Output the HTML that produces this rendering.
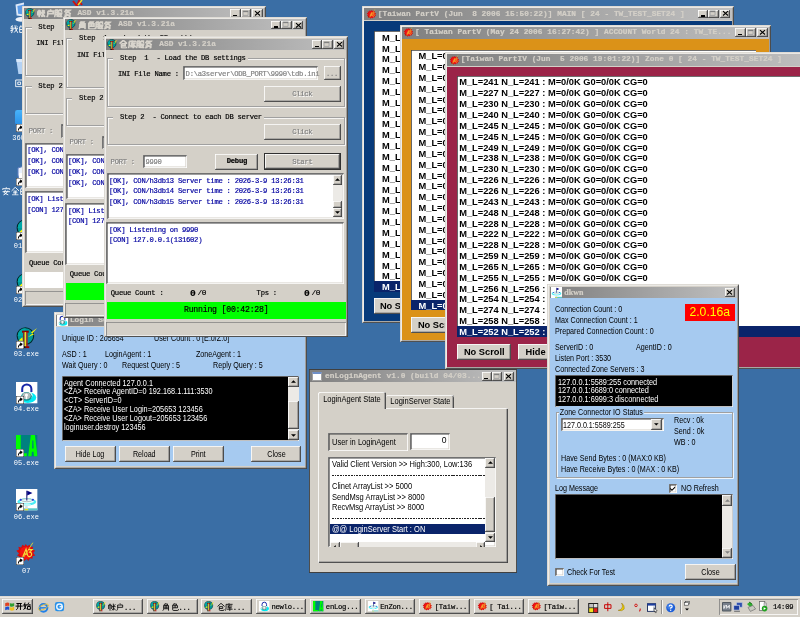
<!DOCTYPE html><html><head><meta charset="utf-8"><title>desktop</title><style>
*{box-sizing:border-box}
html,body{margin:0;padding:0}
body{width:800px;height:617px;overflow:hidden;background:#3A6EA5;position:relative;font-family:"Liberation Sans",sans-serif;font-size:8px;color:#000}
.a{position:absolute}
.w{position:absolute;background:#D4D0C8;box-shadow:inset .8px .8px #D4D0C8,inset -.8px -.8px #404040,inset 1.6px 1.6px #fff,inset -1.6px -1.6px #808080}
.tb{position:absolute;left:2.4px;right:2.4px;top:2.4px;height:11px;background:linear-gradient(90deg,#808080,#C0C0C0);overflow:hidden;white-space:pre}
.tt{position:absolute;top:0;height:11px;line-height:11.4px;color:#D4D0C8;font:bold 7.8px/11.4px "Liberation Mono",monospace;letter-spacing:.045px;white-space:pre;-webkit-text-stroke:.2px}
.cb{position:absolute;top:1.4px;width:10.2px;height:8.6px;background:#D4D0C8;box-shadow:inset -.8px -.8px #404040,inset .8px .8px #fff,inset -1.6px -1.6px #808080}
.b{position:absolute;background:#D4D0C8;box-shadow:inset -.8px -.8px #404040,inset .8px .8px #fff,inset -1.6px -1.6px #808080;text-align:center;white-space:pre}
.s{position:absolute;box-shadow:inset .8px .8px #808080,inset -.8px -.8px #fff,inset 1.6px 1.6px #404040,inset -1.6px -1.6px #D4D0C8}
.g{position:absolute;border:.8px solid #A0A0A0;box-shadow:.8px .8px #fff,inset .8px .8px #fff}
.m{font-family:"Liberation Mono",monospace;font-size:7.2px;letter-spacing:-.26px;white-space:pre;-webkit-text-stroke:.18px}
.n{font-size:9px;transform:scaleX(.795);transform-origin:0 50%}
.x{font-size:9px;display:inline-block;transform:scaleX(.795);white-space:pre}
.n2{font-size:8.6px;transform:scaleX(.874);transform-origin:0 50%}
.x2{font-size:8.6px;display:inline-block;transform:scaleX(.874);white-space:pre}
.t{position:absolute;white-space:pre;height:12px;line-height:12px}
.lb{position:absolute;background:#fff;overflow:hidden}
.r{position:absolute;left:0;width:105%;white-space:pre;font:bold 9.7px/12.8px "Liberation Sans",sans-serif;height:10.85px;transform:scaleX(.958);transform-origin:0 0}
.sel{background:#0A246A;color:#fff}
.sb{position:absolute;background:#ECEAE6}
.sa{position:absolute;left:0;width:100%;background:#D4D0C8;box-shadow:inset -.8px -.8px #404040,inset .8px .8px #fff,inset -1.6px -1.6px #808080}
.lbl{position:absolute;color:#fff;font:7px/9px "Liberation Mono",monospace;white-space:pre;text-align:center}
svg{position:absolute;overflow:visible}
#root{position:absolute;left:0;top:0;width:800px;height:617px;overflow:hidden;background:#3A6EA5;filter:blur(.35px)}
</style></head><body><div id="root">
<svg width="0" height="0" style="position:absolute"><defs>
<symbol id="iasd" viewBox="0 0 32 32"><circle cx="14" cy="13.5" r="12.3" fill="#009898" stroke="#002828" stroke-width="1.6"/><path d="M2.5 13.5A11.5 11.5 0 0 1 14 2V13.5Z" fill="#00A8A8"/><rect x="9" y="5.5" width="10" height="3" fill="#900000"/><rect x="10.4" y="7.5" width="2.4" height="22" fill="#802828"/><rect x="12.8" y="7.5" width="2.6" height="22" fill="#F0E020"/><rect x="15.4" y="7.5" width="1.8" height="22" fill="#C01010"/><rect x="9.5" y="28.6" width="5" height="3" fill="#101010"/><rect x="14.5" y="28.6" width="5.2" height="3" fill="#A00000"/><path d="M31.5 1.5L22 8L25 9.2L17.6 15.4L27 10.8L24.2 9.6Z" fill="#FFF800"/><path d="M3.6 20.4L9.4 15.4L10.2 20.6Z" fill="#FFF800"/></symbol>
<symbol id="ilock" viewBox="0 0 32 32"><rect width="32" height="32" fill="#fff"/><ellipse cx="17.5" cy="23" rx="12.5" ry="8" fill="#00ECF4"/><ellipse cx="14.5" cy="20" rx="10" ry="6.8" fill="#fff"/><ellipse cx="15.5" cy="21.4" rx="8" ry="6.4" fill="#189090"/><ellipse cx="15.5" cy="20.4" rx="6.2" ry="5" fill="#B4BCBC"/><circle cx="15.5" cy="19.4" r="2.3" fill="#fff"/><rect x="14.4" y="20" width="2.2" height="5.4" fill="#fff"/><path d="M9.2 15V10.4a6.8 6.8 0 0 1 13.6 0V15" fill="none" stroke="#1828A8" stroke-width="3"/></symbol>
<symbol id="ila" viewBox="0 0 32 32"><rect width="32" height="32" fill="#008080"/><path d="M0 0H7V27H16V32H0Z" fill="#00FF00"/><path d="M22 0H28L32 32H26.5L26 25H23.5L23 32H18Z" fill="#00FF00"/><path d="M24.2 8H25.8L26.2 20H23.8Z" fill="#008080"/></symbol>
<symbol id="iflag" viewBox="0 0 32 32"><rect width="32" height="32" fill="#fff"/><ellipse cx="16" cy="19" rx="14" ry="5.4" fill="#48ECF4"/><ellipse cx="16" cy="18" rx="10.5" ry="3.6" fill="#E8FCFC"/><ellipse cx="16" cy="16.6" rx="8" ry="2.2" fill="none" stroke="#A8B4B8" stroke-width="1.2"/><ellipse cx="16" cy="23" rx="6" ry="1.6" fill="#C0F8FA"/><circle cx="7" cy="16" r="1.6" fill="#2040D0"/><circle cx="25" cy="16" r="1.6" fill="#2040D0"/><rect x="15.3" y="2.5" width="1.5" height="14.5" fill="#101070"/><path d="M16.6 2.5L24.4 6L16.6 9.6Z" fill="#000080"/><rect x="12" y="28.6" width="20" height="3.4" fill="#58C8C8"/><rect x="13" y="29.4" width="5" height="2.6" fill="#E8E020"/><rect x="13.6" y="25.4" width="3.8" height="4" fill="#D8E0E0"/></symbol>
<symbol id="ia3" viewBox="0 0 32 32"><path d="M16 3L18 6L22 4L23 7.4L27 7L26 11L30 13L27 16L30 20L26 21L26 25L22 24L20 28L17 25L13 29L11 25L7 26L7 22L3 20L6 17L2 13L6 11L5 7L9 8L11 4L14 6Z" fill="#D80C0C"/><circle cx="16.5" cy="16" r="9.4" fill="#F01414"/><path d="M6 20L9 26L13 27Z" fill="#900000"/><path d="M26.5 1L10 27" stroke="#E8D828" stroke-width="1.3"/><path d="M11.5 22L16.4 10.6L19 21M13.4 18H18.4M19.4 11.4H25.4L21.6 15Q26 16 24.2 20Q22.4 22.6 19.6 21" fill="none" stroke="#F4DC38" stroke-width="1.7"/></symbol>
<symbol id="isc" viewBox="0 0 10 10"><rect width="10" height="10" fill="#fff" stroke="#000" stroke-width="1"/><path d="M3 8 Q3 4 7 4 M5 2.5 L7.5 4 L5.5 6" fill="none" stroke="#000" stroke-width="1.3"/></symbol>
<symbol id="c_zhang" viewBox="0 0 12 12"><path d="M1 3V9M1 3H5V9M3 1V11.5M8 1V11M6 5.5H11.5M11 2L8 5M8 7L11.5 11M8 8.5L6 11" /></symbol>
<symbol id="c_hu" viewBox="0 0 12 12"><path d="M6 .5L7 2.2M2.5 3H10V6.5H2.5M2.5 3V8Q2.5 10 1 11.5"/></symbol>
<symbol id="c_fu" viewBox="0 0 12 12"><path d="M1.5 1.5H4.5V11M1.5 1.5V8Q1.5 10 .5 11.5M1.5 4.5H4.5M1.5 7.5H4.5M6.5 1.5H10.5V4.5M6.5 1.5V11.5M6.5 6H11L8 11.5M7.5 7L11.5 11.5"/></symbol>
<symbol id="c_wu" viewBox="0 0 12 12"><path d="M5 .5L2 4.5M4 2H9.5L3 6.5M5 3L11 7M2 8.5H9.5V10.5Q9.5 11.5 7.5 11.2M5.8 6.5Q5.5 10 1.5 11.5"/></symbol>
<symbol id="c_jue" viewBox="0 0 12 12"><path d="M5 .5L2.5 3.5M4.5 1.5H8.5L7.5 3.5M2.5 3.8H9.8V11.5M2.5 3.8V8Q2.5 10 1.2 11.5M2.5 6.2H9.8M2.5 8.6H9.8M6.1 3.8V8.6"/></symbol>
<symbol id="c_se" viewBox="0 0 12 12"><path d="M5 .5L2 4M4.2 1.6H8.5L7.5 3.6M2.5 4H9.8V7.2H2.5ZM6.1 4V7.2M2.5 7.2V10Q2.5 11.2 4 11.2H10Q11.3 11.2 11.3 9.3"/></symbol>
<symbol id="c_cang" viewBox="0 0 12 12"><path d="M6 .5L.8 5.2M6 .5L11.4 5.2M3.5 5.5H8.6V8.2H3.5M3.5 5.5V10Q3.5 11.2 5 11.2H9.6Q10.8 11.2 10.8 9.5"/></symbol>
<symbol id="c_ku" viewBox="0 0 12 12"><path d="M6 .3V2M1.6 2H11.4M1.6 2V7Q1.6 10 .5 11.5M3.6 4.5H10.8M6.6 3L4.4 7.2H10.2M3 9.3H11.4M7.2 5.6V11.8"/></symbol>
<symbol id="c_kai" viewBox="0 0 12 12"><path d="M2 2.2H10M.8 6H11.3M4.4 2.2V7Q4.4 10 1.8 11.5M8 2.2V11.6"/></symbol>
<symbol id="c_shi" viewBox="0 0 12 12"><path d="M3 .8L1.5 6L5 10.5M4.6 3Q4.2 8.5 .8 11.4M.4 4.4H5.6M8.6 .8L6.6 4.6H10.8M9.6 3L11.2 5M6.6 6.6H10.8V10.8H6.6Z"/></symbol>
<symbol id="c_zhong" viewBox="0 0 12 12"><path d="M2 3.4H10V8H2ZM6 .4V11.8"/></symbol>
<symbol id="c_wo" viewBox="0 0 12 12"><path d="M4.4 .8L1.2 2.4M.4 4.6H11.4M3 1.6V10Q3 11.4 1.6 11M.4 8.4L5.2 6.6M7 .4Q7.6 7 11.4 11.4M10.6 5.2L6 10.8M9 .8L10.6 2.6"/></symbol>
<symbol id="c_de" viewBox="0 0 12 12"><path d="M2.8 .4L2.2 2.4M1 2.6H5V10.6H1ZM1 6.4H5M8 .4L6.6 4M7.6 2.4H11V9.6Q11 11.2 9.2 11M8 5.4L9 7.4"/></symbol>
<symbol id="c_hui" viewBox="0 0 12 12"><path d="M1 1.4H11V11H1ZM4 4.4H8V8H4Z"/></symbol>
<symbol id="c_an" viewBox="0 0 12 12"><path d="M6 .3V2M1 4V2.4H11V4M5 4L3 8L9 11.4M8.2 5Q7 9.4 1.8 11.6M.8 6.6H11.2"/></symbol>
<symbol id="c_quan" viewBox="0 0 12 12"><path d="M6 .4L.8 5.6M6 .4L11.4 5.6M3.4 5.8H8.6M3 8.2H9M6 5.8V11M1.4 11.2H10.6"/></symbol>
</defs></svg>
<svg class="a" style="left:14px;top:1px" width="24" height="22" viewBox="0 0 24 22"><path d="M1.5 3.4L10 1.4V15.6L2.6 14.4Z" fill="#DCE8F8"/><path d="M3.4 5L10 3.6V13.6L4.2 12.8Z" fill="#5C9CE8"/><ellipse cx="7" cy="18.4" rx="5.4" ry="2.4" fill="#EEF2FA"/></svg>
<svg class="a" style="left:10.20px;top:25.20px" width="8.40" height="8.40" fill="none" stroke="#fff" stroke-width="1.30"><use href="#c_wo"/></svg><svg class="a" style="left:18.70px;top:25.20px" width="8.40" height="8.40" fill="none" stroke="#fff" stroke-width="1.30"><use href="#c_de"/></svg>
<svg class="a" style="left:15px;top:58px" width="24" height="18" viewBox="0 0 24 18"><path d="M1.2 1H10V16H3.4Z" fill="#B4D2F4"/><path d="M1.2 1H10V4H1.6Z" fill="#D8E8FA"/></svg>
<svg class="a" style="left:14.60px;top:79.00px" width="8.40" height="8.40" fill="none" stroke="#fff" stroke-width="1.30"><use href="#c_hui"/></svg>
<svg class="a" style="left:15.4px;top:109.7px" width="22" height="15" viewBox="0 0 22 15"><defs><linearGradient id="g360" x1="0" y1="0" x2="0" y2="1"><stop offset="0" stop-color="#48B4FA"/><stop offset="1" stop-color="#2A90E8"/></linearGradient></defs><rect x="0" y="0" width="21" height="15" rx="2.4" fill="url(#g360)"/></svg>
<svg class="a" style="left:15.90px;top:124.00px" width="8" height="8"><use href="#isc"/></svg>
<div class="lbl" style="left:12.2px;top:133.6px;text-align:left">360...</div>
<svg class="a" style="left:16px;top:163.9px" width="22" height="22" viewBox="0 0 22 22"><path d="M11 1L20 4V11Q20 18 11 21Q2 18 2 11V4Z" fill="#E8F0FF" stroke="#6080C0"/><path d="M11 3L18 5V11Q18 16 11 19Z" fill="#4878D0"/><rect x="3" y="9" width="4" height="8" fill="#fff"/></svg>
<svg class="a" style="left:15.90px;top:177.60px" width="8" height="8"><use href="#isc"/></svg>
<svg class="a" style="left:2.20px;top:187.20px" width="8.50" height="8.50" fill="none" stroke="#fff" stroke-width="1.30"><use href="#c_an"/></svg><svg class="a" style="left:10.90px;top:187.20px" width="8.50" height="8.50" fill="none" stroke="#fff" stroke-width="1.30"><use href="#c_quan"/></svg><svg class="a" style="left:19.60px;top:187.20px" width="8.50" height="8.50" fill="none" stroke="#fff" stroke-width="1.30"><use href="#c_de"/></svg>
<svg class="a" style="left:15.50px;top:218.60px" width="21.50" height="21.50"><use href="#iasd"/></svg>
<svg class="a" style="left:16.00px;top:232.10px" width="8" height="8"><use href="#isc"/></svg>
<div class="lbl" style="left:-3.70px;top:241.90px;width:60px">01.exe</div>
<svg class="a" style="left:15.50px;top:272.80px" width="21.50" height="21.50"><use href="#iasd"/></svg>
<svg class="a" style="left:16.00px;top:286.30px" width="8" height="8"><use href="#isc"/></svg>
<div class="lbl" style="left:-3.70px;top:296.10px;width:60px">02.exe</div>
<svg class="a" style="left:15.50px;top:327.00px" width="21.50" height="21.50"><use href="#iasd"/></svg>
<svg class="a" style="left:16.00px;top:340.50px" width="8" height="8"><use href="#isc"/></svg>
<div class="lbl" style="left:-3.70px;top:350.30px;width:60px">03.exe</div>
<svg class="a" style="left:15.70px;top:381.90px" width="21.60" height="21.60"><use href="#ilock"/></svg>
<svg class="a" style="left:16.00px;top:395.70px" width="8" height="8"><use href="#isc"/></svg>
<div class="lbl" style="left:-3.70px;top:404.50px;width:60px">04.exe</div>
<svg class="a" style="left:15.70px;top:435.10px" width="21.60" height="21.60"><use href="#ila"/></svg>
<svg class="a" style="left:16.00px;top:449.40px" width="8" height="8"><use href="#isc"/></svg>
<div class="lbl" style="left:-3.70px;top:458.90px;width:60px">05.exe</div>
<svg class="a" style="left:15.70px;top:488.60px" width="21.60" height="21.60"><use href="#iflag"/></svg>
<svg class="a" style="left:16.00px;top:503.10px" width="8" height="8"><use href="#isc"/></svg>
<div class="lbl" style="left:-3.70px;top:512.80px;width:60px">06.exe</div>
<svg class="a" style="left:15.40px;top:542.30px" width="21.60" height="21.60"><use href="#ia3"/></svg>
<svg class="a" style="left:16.00px;top:557.30px" width="8" height="8"><use href="#isc"/></svg>
<div class="lbl" style="left:-3.70px;top:567.20px;width:60px">07</div>
<svg class="a" style="left:72px;top:0" width="12" height="7" viewBox="0 0 12 7"><path d="M1 1L5 6L7 1L10 5" stroke="#D01010" stroke-width="2" fill="none"/><path d="M6 5L10 0" stroke="#F0E020" stroke-width="1.4"/></svg>
<div class="w" style="left:362.30px;top:6.20px;width:371.40px;height:317.20px;background:#D4D0C8;"><div class="a" style="left:2.1px;top:14.5px;right:2.1px;bottom:2.1px;background:#073A7A"></div><div class="tb" style="left:2.1px;right:2.1px;top:2.1px;height:12.2px"><svg class="a" style="left:1.30px;top:0.50px" width="10.80" height="10.80"><use href="#ia3"/></svg><div class="tt" style="left:13.3px;top:.4px">[Taiwan PartV (Jun  8 2006 15:50:22)] MAIN [ 24 - TW_TEST_SET24 ]</div><div class="cb" style="right:1.20px"><svg style="left:2.4px;top:1.8px" width="5" height="4.6" viewBox="0 0 8 7"><path d="M0 0L8 7M8 0L0 7" stroke="#000" stroke-width="1.7"/></svg></div><div class="cb" style="right:13.00px"><svg style="left:2px;top:1.6px" width="6" height="5" viewBox="0 0 8 7"><rect x=".7" y=".7" width="6.6" height="5.6" fill="none" stroke="#fff" stroke-width="1"/><rect x="0" y="0" width="7" height="6" fill="none" stroke="#808080" stroke-width="1"/><rect x="0" y="0" width="7" height="1.6" fill="#808080"/></svg></div><div class="cb" style="right:23.20px"><div class="a" style="left:2.4px;top:5.6px;width:4.2px;height:1.4px;background:#000"></div></div></div><div class="lb" style="left:11.6px;top:24.90px;width:344.65px;height:261.00px;box-shadow:inset .8px .8px #404040"><div class="r" style="top:0.60px;padding-left:8.4px">M_L=201 N_L=201 : M=0/0K G0=0/0K CG=0</div><div class="r" style="top:11.45px;padding-left:8.4px">M_L=203 N_L=203 : M=0/0K G0=0/0K CG=0</div><div class="r" style="top:22.30px;padding-left:8.4px">M_L=198 N_L=198 : M=0/0K G0=0/0K CG=0</div><div class="r" style="top:33.15px;padding-left:8.4px">M_L=205 N_L=205 : M=0/0K G0=0/0K CG=0</div><div class="r" style="top:44.00px;padding-left:8.4px">M_L=211 N_L=211 : M=0/0K G0=0/0K CG=0</div><div class="r" style="top:54.85px;padding-left:8.4px">M_L=207 N_L=207 : M=0/0K G0=0/0K CG=0</div><div class="r" style="top:65.70px;padding-left:8.4px">M_L=202 N_L=202 : M=0/0K G0=0/0K CG=0</div><div class="r" style="top:76.55px;padding-left:8.4px">M_L=199 N_L=199 : M=0/0K G0=0/0K CG=0</div><div class="r" style="top:87.40px;padding-left:8.4px">M_L=204 N_L=204 : M=0/0K G0=0/0K CG=0</div><div class="r" style="top:98.25px;padding-left:8.4px">M_L=210 N_L=210 : M=0/0K G0=0/0K CG=0</div><div class="r" style="top:109.10px;padding-left:8.4px">M_L=206 N_L=206 : M=0/0K G0=0/0K CG=0</div><div class="r" style="top:119.95px;padding-left:8.4px">M_L=203 N_L=203 : M=0/0K G0=0/0K CG=0</div><div class="r" style="top:130.80px;padding-left:8.4px">M_L=209 N_L=209 : M=0/0K G0=0/0K CG=0</div><div class="r" style="top:141.65px;padding-left:8.4px">M_L=212 N_L=212 : M=0/0K G0=0/0K CG=0</div><div class="r" style="top:152.50px;padding-left:8.4px">M_L=200 N_L=200 : M=0/0K G0=0/0K CG=0</div><div class="r" style="top:163.35px;padding-left:8.4px">M_L=205 N_L=205 : M=0/0K G0=0/0K CG=0</div><div class="r" style="top:174.20px;padding-left:8.4px">M_L=207 N_L=207 : M=0/0K G0=0/0K CG=0</div><div class="r" style="top:185.05px;padding-left:8.4px">M_L=211 N_L=211 : M=0/0K G0=0/0K CG=0</div><div class="r" style="top:195.90px;padding-left:8.4px">M_L=208 N_L=208 : M=0/0K G0=0/0K CG=0</div><div class="r" style="top:206.75px;padding-left:8.4px">M_L=204 N_L=204 : M=0/0K G0=0/0K CG=0</div><div class="r" style="top:217.60px;padding-left:8.4px">M_L=206 N_L=206 : M=0/0K G0=0/0K CG=0</div><div class="r" style="top:228.45px;padding-left:8.4px">M_L=210 N_L=210 : M=0/0K G0=0/0K CG=0</div><div class="r" style="top:239.30px;padding-left:8.4px">M_L=203 N_L=203 : M=0/0K G0=0/0K CG=0</div><div class="r sel" style="top:250.15px;padding-left:8.4px">M_L=207 N_L=207 : M=0/0K G0=0/0K CG=0</div></div><div class="b" style="left:11.6px;top:292px;width:53.6px;height:16px;font:bold 9.7px/15.8px 'Liberation Sans',sans-serif"><span style="display:inline-block;transform:scaleX(.958)">No Scroll</span></div><div class="b" style="left:72.8px;top:292px;width:35.0px;height:16px;font:bold 9.7px/15.8px 'Liberation Sans',sans-serif"><span style="display:inline-block;transform:scaleX(.958)">Hide</span></div></div>
<div class="w" style="left:399.60px;top:24.60px;width:371.20px;height:317.20px;background:#D4D0C8;"><div class="a" style="left:2.1px;top:14.5px;right:2.1px;bottom:2.1px;background:#DB9218"></div><div class="tb" style="left:2.1px;right:2.1px;top:2.1px;height:12.2px"><svg class="a" style="left:1.30px;top:0.50px" width="10.80" height="10.80"><use href="#ia3"/></svg><div class="tt" style="left:13.3px;top:.4px">[ Taiwan PartV (May 24 2006 16:27:42) ] ACCOUNT World 24 : TW_TE...</div><div class="cb" style="right:1.20px"><svg style="left:2.4px;top:1.8px" width="5" height="4.6" viewBox="0 0 8 7"><path d="M0 0L8 7M8 0L0 7" stroke="#000" stroke-width="1.7"/></svg></div><div class="cb" style="right:13.00px"><svg style="left:2px;top:1.6px" width="6" height="5" viewBox="0 0 8 7"><rect x=".7" y=".7" width="6.6" height="5.6" fill="none" stroke="#fff" stroke-width="1"/><rect x="0" y="0" width="7" height="6" fill="none" stroke="#808080" stroke-width="1"/><rect x="0" y="0" width="7" height="1.6" fill="#808080"/></svg></div><div class="cb" style="right:23.20px"><div class="a" style="left:2.4px;top:5.6px;width:4.2px;height:1.4px;background:#000"></div></div></div><div class="lb" style="left:11.6px;top:25.00px;width:344.65px;height:260.80px;box-shadow:inset .8px .8px #404040"><div class="r" style="top:0.60px;padding-left:7.9px">M_L=0</div><div class="r" style="top:11.45px;padding-left:7.9px">M_L=0</div><div class="r" style="top:22.30px;padding-left:7.9px">M_L=0</div><div class="r" style="top:33.15px;padding-left:7.9px">M_L=0</div><div class="r" style="top:44.00px;padding-left:7.9px">M_L=0</div><div class="r" style="top:54.85px;padding-left:7.9px">M_L=0</div><div class="r" style="top:65.70px;padding-left:7.9px">M_L=0</div><div class="r" style="top:76.55px;padding-left:7.9px">M_L=0</div><div class="r" style="top:87.40px;padding-left:7.9px">M_L=0</div><div class="r" style="top:98.25px;padding-left:7.9px">M_L=0</div><div class="r" style="top:109.10px;padding-left:7.9px">M_L=0</div><div class="r" style="top:119.95px;padding-left:7.9px">M_L=0</div><div class="r" style="top:130.80px;padding-left:7.9px">M_L=0</div><div class="r" style="top:141.65px;padding-left:7.9px">M_L=0</div><div class="r" style="top:152.50px;padding-left:7.9px">M_L=0</div><div class="r" style="top:163.35px;padding-left:7.9px">M_L=0</div><div class="r" style="top:174.20px;padding-left:7.9px">M_L=0</div><div class="r" style="top:185.05px;padding-left:7.9px">M_L=0</div><div class="r" style="top:195.90px;padding-left:7.9px">M_L=0</div><div class="r" style="top:206.75px;padding-left:7.9px">M_L=0</div><div class="r" style="top:217.60px;padding-left:7.9px">M_L=0</div><div class="r" style="top:228.45px;padding-left:7.9px">M_L=0</div><div class="r" style="top:239.30px;padding-left:7.9px">M_L=0</div><div class="r sel" style="top:250.15px;padding-left:7.9px">M_L=0</div></div><div class="b" style="left:11.6px;top:292px;width:53.6px;height:16px;font:bold 9.7px/15.8px 'Liberation Sans',sans-serif"><span style="display:inline-block;transform:scaleX(.958)">No Scroll</span></div><div class="b" style="left:72.8px;top:292px;width:35.0px;height:16px;font:bold 9.7px/15.8px 'Liberation Sans',sans-serif"><span style="display:inline-block;transform:scaleX(.958)">Hide</span></div></div>
<div class="w" style="left:445.40px;top:52.00px;width:371.20px;height:316.80px;background:#D4D0C8;"><div class="a" style="left:2.1px;top:14.5px;right:2.1px;bottom:2.1px;background:#9B2448"></div><div class="tb" style="left:2.1px;right:2.1px;top:2.1px;height:12.2px"><svg class="a" style="left:1.30px;top:0.50px" width="10.80" height="10.80"><use href="#ia3"/></svg><div class="tt" style="left:13.3px;top:.4px">[Taiwan PartIV (Jun  5 2006 19:01:22)] Zone 0 [ 24 - TW_TEST_SET24 ]</div></div><div class="lb" style="left:11.6px;top:23.90px;width:344.65px;height:261.40px;box-shadow:inset .8px .8px #404040"><div class="r" style="top:0.60px;padding-left:2.3px">M_L=241 N_L=241 : M=0/0K G0=0/0K CG=0</div><div class="r" style="top:11.45px;padding-left:2.3px">M_L=227 N_L=227 : M=0/0K G0=0/0K CG=0</div><div class="r" style="top:22.30px;padding-left:2.3px">M_L=230 N_L=230 : M=0/0K G0=0/0K CG=0</div><div class="r" style="top:33.15px;padding-left:2.3px">M_L=240 N_L=240 : M=0/0K G0=0/0K CG=0</div><div class="r" style="top:44.00px;padding-left:2.3px">M_L=245 N_L=245 : M=0/0K G0=0/0K CG=0</div><div class="r" style="top:54.85px;padding-left:2.3px">M_L=245 N_L=245 : M=0/0K G0=0/0K CG=0</div><div class="r" style="top:65.70px;padding-left:2.3px">M_L=249 N_L=249 : M=0/0K G0=0/0K CG=0</div><div class="r" style="top:76.55px;padding-left:2.3px">M_L=238 N_L=238 : M=0/0K G0=0/0K CG=0</div><div class="r" style="top:87.40px;padding-left:2.3px">M_L=230 N_L=230 : M=0/0K G0=0/0K CG=0</div><div class="r" style="top:98.25px;padding-left:2.3px">M_L=226 N_L=226 : M=0/0K G0=0/0K CG=0</div><div class="r" style="top:109.10px;padding-left:2.3px">M_L=226 N_L=226 : M=0/0K G0=0/0K CG=0</div><div class="r" style="top:119.95px;padding-left:2.3px">M_L=243 N_L=243 : M=0/0K G0=0/0K CG=0</div><div class="r" style="top:130.80px;padding-left:2.3px">M_L=248 N_L=248 : M=0/0K G0=0/0K CG=0</div><div class="r" style="top:141.65px;padding-left:2.3px">M_L=228 N_L=228 : M=0/0K G0=0/0K CG=0</div><div class="r" style="top:152.50px;padding-left:2.3px">M_L=222 N_L=222 : M=0/0K G0=0/0K CG=0</div><div class="r" style="top:163.35px;padding-left:2.3px">M_L=228 N_L=228 : M=0/0K G0=0/0K CG=0</div><div class="r" style="top:174.20px;padding-left:2.3px">M_L=259 N_L=259 : M=0/0K G0=0/0K CG=0</div><div class="r" style="top:185.05px;padding-left:2.3px">M_L=265 N_L=265 : M=0/0K G0=0/0K CG=0</div><div class="r" style="top:195.90px;padding-left:2.3px">M_L=255 N_L=255 : M=0/0K G0=0/0K CG=0</div><div class="r" style="top:206.75px;padding-left:2.3px">M_L=256 N_L=256 : M=0/0K G0=0/0K CG=0</div><div class="r" style="top:217.60px;padding-left:2.3px">M_L=254 N_L=254 : M=0/0K G0=0/0K CG=0</div><div class="r" style="top:228.45px;padding-left:2.3px">M_L=274 N_L=274 : M=0/0K G0=0/0K CG=0</div><div class="r" style="top:239.30px;padding-left:2.3px">M_L=258 N_L=258 : M=0/0K G0=0/0K CG=0</div><div class="r sel" style="top:250.15px;padding-left:2.3px">M_L=252 N_L=252 : M=0/0K G0=0/0K CG=0</div></div><div class="b" style="left:11.6px;top:292px;width:53.6px;height:16px;font:bold 9.7px/15.8px 'Liberation Sans',sans-serif"><span style="display:inline-block;transform:scaleX(.958)">No Scroll</span></div><div class="b" style="left:72.8px;top:292px;width:35.0px;height:16px;font:bold 9.7px/15.8px 'Liberation Sans',sans-serif"><span style="display:inline-block;transform:scaleX(.958)">Hide</span></div></div>
<div class="w" style="left:546.90px;top:284.00px;width:192.60px;height:301.90px;background:#D4D0C8;"><div class="a" style="left:2.7px;top:14.4px;right:2.7px;bottom:2.7px;background:#A6CAF0"></div><div class="tb" style="left:2.7px;right:2.7px;top:2.7px;height:11.8px"><svg class="a" style="left:1.40px;top:0.40px" width="11.00" height="11.00"><use href="#iflag"/></svg><div class="tt" style="left:14.6px;top:.4px;font-family:'Liberation Serif',serif;font-size:8px">dkwn</div><div class="cb" style="right:1.60px"><svg style="left:2.4px;top:1.8px" width="5" height="4.6" viewBox="0 0 8 7"><path d="M0 0L8 7M8 0L0 7" stroke="#000" stroke-width="1.7"/></svg></div></div><div class="t n" style="left:8.50px;top:19.00px;">Connection Count : 0</div><div class="t n" style="left:8.50px;top:30.00px;">Max Connection Count : 1</div><div class="t n" style="left:8.50px;top:40.80px;">Prepared Connection Count : 0</div><div class="t n" style="left:8.50px;top:57.00px;">ServerID : 0</div><div class="t n" style="left:89.10px;top:57.00px;">AgentID : 0</div><div class="t n" style="left:8.50px;top:67.60px;">Listen Port : 3530</div><div class="t n" style="left:8.50px;top:78.80px;">Connected Zone Servers : 3</div><div class="a" style="left:138.1px;top:20.0px;width:49.6px;height:16.6px;background:#F00;color:#FF0;font-size:12.2px;line-height:16.8px;text-align:center">2.0.16a</div><div class="a" style="left:8.5px;top:91.4px;width:178px;height:31.6px;background:#000;color:#fff;box-shadow:inset .8px .8px #808080,inset -.8px -.8px #fff;white-space:pre;line-height:8.7px;padding:2.2px 0 0 2.4px"><div class="n" style="transform:scaleX(.815)">127.0.0.1:5589:255 connected
127.0.0.1:6689:0 connected
127.0.0.1:6999:3 disconnected</div></div><div class="g" style="left:8.9px;top:127.6px;width:177.6px;height:66.4px"></div><div class="t n" style="left:12.1px;top:121.6px;background:#A6CAF0;padding:0 1px">Zone Connector IO Status</div><div class="s" style="left:13.7px;top:133.6px;width:103px;height:13.6px;background:#fff"></div><div class="t n" style="left:16.10px;top:134.60px;">127.0.0.1:5589:255</div><div class="b" style="left:104.3px;top:135.2px;width:10.6px;height:10.4px"><svg style="left:3px;top:4px" width="4.6" height="2.6" viewBox="0 0 6 3"><path d="M0 0L3 3L6 0Z" fill="#000"/></svg></div><div class="t n" style="left:127.10px;top:130.40px;">Recv : 0k</div><div class="t n" style="left:127.10px;top:141.20px;">Send : 0k</div><div class="t n" style="left:127.10px;top:151.80px;">WB : 0</div><div class="t n" style="left:13.70px;top:167.80px;">Have Send Bytes : 0 (MAX:0 KB)</div><div class="t n" style="left:13.70px;top:178.60px;">Have Receive Bytes : 0 (MAX : 0 KB)</div><div class="t n" style="left:8.50px;top:197.60px;">Log Message</div><div class="s" style="left:121.9px;top:200.0px;width:8.6px;height:8.6px;background:#fff"><svg style="left:1.6px;top:1.8px" width="5.4" height="5" viewBox="0 0 7 7"><path d="M0 2.5L2.5 5L7 0.5V2.5L2.5 7L0 4.5Z" fill="#000"/></svg></div><div class="t n" style="left:133.70px;top:198.00px;">NO Refresh</div><div class="a" style="left:8.3px;top:210.4px;width:178px;height:64.4px;background:#000;box-shadow:inset .8px .8px #808080,inset -.8px -.8px #fff"></div><div class="sb" style="left:175.30px;top:211.40px;width:10.20px;height:62.40px"><div class="sa" style="top:0;height:10.20px"><svg style="left:2.60px;top:3.30px" width="5" height="3" viewBox="0 0 6 3"><path d="M0 3L3 0L6 3Z" fill="#808080"/></svg></div><div class="sa" style="bottom:0;height:10.20px"><svg style="left:2.60px;top:3.90px" width="5" height="3" viewBox="0 0 6 3"><path d="M0 0L3 3L6 0Z" fill="#808080"/></svg></div></div><div class="s" style="left:8.5px;top:283.6px;width:8.6px;height:8.6px;background:#fff"></div><div class="t n" style="left:20.50px;top:282.00px;">Check For Test</div><div class="b" style="left:138.1px;top:280.0px;width:50.6px;height:16.2px;line-height:16.2px"><span class="x">Close</span></div></div>
<div class="w" style="left:309.20px;top:369.10px;width:208.20px;height:204.30px;background:#D4D0C8;box-shadow:inset .9px .9px #404040,inset -.9px -.9px #404040;"><div class="tb" style="left:0.9px;right:0.9px;top:0.9px;height:12.4px"><div class="a" style="left:1.6px;top:2px;width:10.4px;height:8.6px;background:#fff;border:.8px solid #A0A0A0;border-top:2px solid #7090C8"></div><div class="tt" style="left:15px;top:.7px">enLoginAgent v1.0 (build 04/03...</div><div class="cb" style="right:2.60px;top:2.2px"><svg style="left:2.4px;top:1.8px" width="5" height="4.6" viewBox="0 0 8 7"><path d="M0 0L8 7M8 0L0 7" stroke="#000" stroke-width="1.7"/></svg></div><div class="cb" style="right:14.40px;top:2.2px"><svg style="left:2px;top:1.6px" width="6" height="5" viewBox="0 0 8 7"><rect x=".7" y=".7" width="6.6" height="5.6" fill="none" stroke="#fff" stroke-width="1"/><rect x="0" y="0" width="7" height="6" fill="none" stroke="#808080" stroke-width="1"/><rect x="0" y="0" width="7" height="1.6" fill="#808080"/></svg></div><div class="cb" style="right:24.60px;top:2.2px"><div class="a" style="left:2.4px;top:5.6px;width:4.2px;height:1.4px;background:#000"></div></div></div><div class="a" style="left:8.6px;top:38.9px;width:190.6px;height:155.4px;box-shadow:inset .8px .8px #fff,inset -.8px -.8px #404040,inset -1.6px -1.6px #808080"></div><div class="a" style="left:8.4px;top:23.3px;width:68.6px;height:16.6px;background:#D4D0C8;border-radius:2px 2px 0 0;box-shadow:inset .8px .8px #fff,inset -.8px 0 #404040,inset -1.6px 0 #808080;line-height:15px;text-align:center;"><span class="x2">LoginAgent State</span></div><div class="a" style="left:77.0px;top:25.9px;width:67.6px;height:13px;border-radius:2px 2px 0 0;box-shadow:inset 0 .8px #fff,inset -.8px 0 #404040,inset -1.6px 0 #808080;line-height:13.6px;text-align:center;white-space:pre"><span class="x2">LoginServer State</span></div><div class="s" style="left:19.1px;top:63.9px;width:79.4px;height:18px;line-height:18.6px;padding-left:3.4px;white-space:pre"><div class="n2">User in LoginAgent</div></div><div class="s" style="left:100.6px;top:63.9px;width:40.4px;height:17.4px;background:#fff;line-height:15.6px;text-align:right;padding-right:3.6px;font-size:8.6px">0</div><div class="s" style="left:19.1px;top:87.7px;width:168.2px;height:90.4px;background:#fff;overflow:hidden"><div class="t n2" style="left:3.4px;top:1.60px;">Valid Client Version &gt;&gt; High:300, Low:136</div><div class="a" style="left:3.4px;top:18.52px;width:153px;height:.8px;background:repeating-linear-gradient(90deg,#202020 0 1.7px,transparent 1.7px 2.7px)"></div><div class="t n2" style="left:3.4px;top:23.04px;">Clinet ArrayList &gt;&gt; 5000</div><div class="t n2" style="left:3.4px;top:33.76px;">SendMsg ArrayList &gt;&gt; 8000</div><div class="t n2" style="left:3.4px;top:44.48px;">RecvMsg ArrayList &gt;&gt; 8000</div><div class="a" style="left:3.4px;top:61.40px;width:153px;height:.8px;background:repeating-linear-gradient(90deg,#202020 0 1.7px,transparent 1.7px 2.7px)"></div><div class="a sel" style="left:1.6px;top:66.92px;width:155.6px;height:10.4px"></div><div class="t n2" style="left:3.4px;top:65.92px;color:#fff;">@@ LoginServer Start : ON</div><div class="sb" style="left:157.20px;top:1.60px;width:9.80px;height:84.00px"><div class="sa" style="top:0;height:9.80px"><svg style="left:2.40px;top:3.10px" width="5" height="3" viewBox="0 0 6 3"><path d="M0 3L3 0L6 3Z" fill="#000"/></svg></div><div class="sa" style="bottom:0;height:9.80px"><svg style="left:2.40px;top:3.70px" width="5" height="3" viewBox="0 0 6 3"><path d="M0 0L3 3L6 0Z" fill="#000"/></svg></div><div class="sa" style="top:38.60px;height:35.40px"></div></div><div class="sb" style="left:1.6px;top:85.6px;width:155.6px;height:8px"></div><div class="b" style="left:1.6px;top:85.6px;width:9.8px;height:8px"><svg style="left:3px;top:2.6px" width="3" height="5" viewBox="0 0 3 6"><path d="M3 0L0 3L3 6Z"/></svg></div><div class="b" style="left:11.4px;top:85.6px;width:19px;height:8px"></div><div class="b" style="left:147.4px;top:85.6px;width:9.8px;height:8px"><svg style="left:4px;top:2.6px" width="3" height="5" viewBox="0 0 3 6"><path d="M0 0L3 3L0 6Z"/></svg></div></div></div>
<div class="w" style="left:22.20px;top:5.70px;width:244.20px;height:301.00px;background:#D4D0C8;"><div class="tb" style="left:2.2px;right:2.2px;top:2.2px;height:11px"><svg class="a" style="left:0.80px;top:0.00px" width="11.00" height="11.00"><use href="#iasd"/></svg><svg class="a" style="left:12.90px;top:1.30px" width="8.60" height="8.60" fill="none" stroke="#D8D4CC" stroke-width="2.30"><use href="#c_zhang"/></svg><svg class="a" style="left:21.35px;top:1.30px" width="8.60" height="8.60" fill="none" stroke="#D8D4CC" stroke-width="2.30"><use href="#c_hu"/></svg><svg class="a" style="left:29.80px;top:1.30px" width="8.60" height="8.60" fill="none" stroke="#D8D4CC" stroke-width="2.30"><use href="#c_fu"/></svg><svg class="a" style="left:38.25px;top:1.30px" width="8.60" height="8.60" fill="none" stroke="#D8D4CC" stroke-width="2.30"><use href="#c_wu"/></svg><div class="tt" style="left:53px">ASD v1.3.21a</div><div class="cb" style="right:1.60px"><svg style="left:2.4px;top:1.8px" width="5" height="4.6" viewBox="0 0 8 7"><path d="M0 0L8 7M8 0L0 7" stroke="#000" stroke-width="1.7"/></svg></div><div class="cb" style="right:13.40px"><svg style="left:2px;top:1.6px" width="6" height="5" viewBox="0 0 8 7"><rect x=".7" y=".7" width="6.6" height="5.6" fill="none" stroke="#fff" stroke-width="1"/><rect x="0" y="0" width="7" height="6" fill="none" stroke="#808080" stroke-width="1"/><rect x="0" y="0" width="7" height="1.6" fill="#808080"/></svg></div><div class="cb" style="right:23.60px"><div class="a" style="left:2.4px;top:5.6px;width:4.2px;height:1.4px;background:#000"></div></div></div><div class="g" style="left:3.2px;top:21.2px;width:237.4px;height:49.2px"></div><div class="t m" style="left:9.4px;top:15.2px;background:#D4D0C8;padding:0 2px 0 6.6px">Step  1  - Load the DB settings</div><div class="t m" style="left:14.00px;top:31.60px;">INI File Name :</div><div class="s" style="left:79.0px;top:30.0px;width:135.4px;height:13.4px;background:#fff"></div><div class="t m" style="left:81.60px;top:31.20px;color:#808080">D:\a3server\ODB_PORT\9970\adb.ini</div><div class="b m" style="left:219.6px;top:30.0px;width:17px;height:14px;line-height:16.5px;color:#808080">...</div><div class="b m" style="left:160.0px;top:49.6px;width:76.6px;height:16.2px;line-height:16.2px;color:#808080;text-shadow:.7px .7px #fff">Click</div><div class="g" style="left:3.2px;top:80.6px;width:237.4px;height:28px"></div><div class="t m" style="left:9.4px;top:74.6px;background:#D4D0C8;padding:0 2px 0 6.6px">Step 2  - Connect to each DB server</div><div class="b m" style="left:160.0px;top:87.8px;width:76.6px;height:16.2px;line-height:16.2px;color:#808080;text-shadow:.7px .7px #fff">Click</div><div class="t m" style="left:6.60px;top:119.20px;color:#808080;text-shadow:.7px .7px #fff">PORT :</div><div class="s" style="left:39.0px;top:118.6px;width:44px;height:13.4px;background:#fff"></div><div class="t m" style="left:41.40px;top:119.40px;color:#808080">9970</div><div class="b m" style="left:111.4px;top:117.6px;width:43px;height:15.8px;line-height:15.8px;font-weight:bold">Debug</div><div class="b m" style="left:159.6px;top:116.6px;width:77.6px;height:17.4px;line-height:17.4px;color:#808080;text-shadow:.7px .7px #fff;border:.8px solid #303030">Start</div><div class="s" style="left:2.8px;top:137.0px;width:237.2px;height:45.2px;background:#fff"></div><div class="t m" style="left:5.00px;top:138.20px;color:#0000A0">[OK], CON/h3db13 Server time : 2026-3-9 13:26:31</div><div class="t m" style="left:5.00px;top:149.10px;color:#0000A0">[OK], CON/h3db14 Server time : 2026-3-9 13:26:31</div><div class="t m" style="left:5.00px;top:160.00px;color:#0000A0">[OK], CON/h3db15 Server time : 2026-3-9 13:26:31</div><div class="sb" style="left:228.80px;top:139.00px;width:9.60px;height:42.00px"><div class="sa" style="top:0;height:9.60px"><svg style="left:2.30px;top:3.00px" width="5" height="3" viewBox="0 0 6 3"><path d="M0 3L3 0L6 3Z" fill="#000"/></svg></div><div class="sa" style="bottom:0;height:9.60px"><svg style="left:2.30px;top:3.60px" width="5" height="3" viewBox="0 0 6 3"><path d="M0 0L3 3L6 0Z" fill="#000"/></svg></div><div class="sa" style="top:25.20px;height:7.00px"></div></div><div class="s" style="left:2.4px;top:185.8px;width:237.6px;height:62px;background:#fff"></div><div class="t m" style="left:5.00px;top:187.40px;color:#0000A0">[OK] Listening on 9970</div><div class="t m" style="left:5.00px;top:198.00px;color:#0000A0">[CON] 127.0.0.1(131602)</div><div class="t m" style="left:6.80px;top:251.00px;">Queue Count :</div><div class="t m" style="left:86.00px;top:251.20px;font-weight:bold;font-size:9.6px">0</div><div class="t m" style="left:93.40px;top:250.80px;font-size:7.8px">/0</div><div class="t m" style="left:152.60px;top:251.00px;">Tps :</div><div class="t m" style="left:200.00px;top:251.20px;font-weight:bold;font-size:9.6px">0</div><div class="t m" style="left:207.40px;top:250.80px;font-size:7.8px">/0</div><div class="a m" style="left:2.8px;top:266.0px;width:238.8px;height:16.8px;background:#fff"></div><div class="a" style="left:2.4px;top:285.8px;width:239.6px;height:13.4px;box-shadow:inset .8px .8px #808080,inset -.8px -.8px #fff"></div></div>
<div class="w" style="left:53.50px;top:312.00px;width:253.90px;height:157.00px;background:#D4D0C8;"><div class="a" style="left:2.7px;top:14.5px;right:2.7px;bottom:2.7px;background:#A6CAF0"></div><div class="tb" style="left:2.7px;right:2.7px;top:2.7px;height:11.8px"><svg class="a" style="left:1.20px;top:0.40px" width="11.00" height="11.00"><use href="#ilock"/></svg><div class="tt" style="left:13.7px;top:.4px">Login Server v1.0</div></div><div class="t n" style="left:8.50px;top:20.00px;">Unique ID : 205654</div><div class="t n" style="left:100.50px;top:20.00px;">User Count : 0 [E:0/Z:0]</div><div class="t n" style="left:8.50px;top:35.70px;">ASD : 1</div><div class="t n" style="left:51.50px;top:35.70px;">LoginAgent : 1</div><div class="t n" style="left:142.90px;top:35.70px;">ZoneAgent : 1</div><div class="t n" style="left:8.50px;top:46.90px;">Wait Query : 0</div><div class="t n" style="left:68.10px;top:46.90px;">Request Query : 5</div><div class="t n" style="left:159.90px;top:46.90px;">Reply Query : 5</div><div class="a" style="left:8.5px;top:64.2px;width:237.2px;height:64.8px;background:#000;color:#fff;box-shadow:inset .8px .8px #808080,inset -.8px -.8px #fff;white-space:pre;line-height:8.8px;padding:2.4px 0 0 1.8px"><div class="n" style="transform:scaleX(.812)">Agent Connected 127.0.0.1
&lt;ZA&gt; Receive AgentID=0 192.168.1.111:3530
&lt;CT&gt; ServerID=0
&lt;ZA&gt; Receive User Login=205653 123456
&lt;ZA&gt; Receive User Logout=205653 123456
loginuser.destroy 123456</div></div><div class="sb" style="left:234.90px;top:65.00px;width:10.20px;height:63.00px"><div class="sa" style="top:0;height:10.20px"><svg style="left:2.60px;top:3.30px" width="5" height="3" viewBox="0 0 6 3"><path d="M0 3L3 0L6 3Z" fill="#000"/></svg></div><div class="sa" style="bottom:0;height:10.20px"><svg style="left:2.60px;top:3.90px" width="5" height="3" viewBox="0 0 6 3"><path d="M0 0L3 3L6 0Z" fill="#000"/></svg></div><div class="sa" style="top:23.60px;height:28.60px"></div></div><div class="b" style="left:11.5px;top:134.0px;width:50.6px;height:16.4px;line-height:16.4px"><span class="x">Hide Log</span></div><div class="b" style="left:65.5px;top:134.0px;width:51.0px;height:16.4px;line-height:16.4px"><span class="x">Reload</span></div><div class="b" style="left:119.5px;top:134.0px;width:51.0px;height:16.4px;line-height:16.4px"><span class="x">Print</span></div><div class="b" style="left:197.5px;top:134.0px;width:50.4px;height:16.4px;line-height:16.4px"><span class="x">Close</span></div></div>
<div class="w" style="left:63.00px;top:17.20px;width:244.20px;height:301.00px;background:#D4D0C8;"><div class="tb" style="left:2.2px;right:2.2px;top:2.2px;height:11px"><svg class="a" style="left:0.80px;top:0.00px" width="11.00" height="11.00"><use href="#iasd"/></svg><svg class="a" style="left:12.90px;top:1.30px" width="8.60" height="8.60" fill="none" stroke="#D8D4CC" stroke-width="2.30"><use href="#c_jue"/></svg><svg class="a" style="left:21.35px;top:1.30px" width="8.60" height="8.60" fill="none" stroke="#D8D4CC" stroke-width="2.30"><use href="#c_se"/></svg><svg class="a" style="left:29.80px;top:1.30px" width="8.60" height="8.60" fill="none" stroke="#D8D4CC" stroke-width="2.30"><use href="#c_fu"/></svg><svg class="a" style="left:38.25px;top:1.30px" width="8.60" height="8.60" fill="none" stroke="#D8D4CC" stroke-width="2.30"><use href="#c_wu"/></svg><div class="tt" style="left:53px">ASD v1.3.21a</div><div class="cb" style="right:1.60px"><svg style="left:2.4px;top:1.8px" width="5" height="4.6" viewBox="0 0 8 7"><path d="M0 0L8 7M8 0L0 7" stroke="#000" stroke-width="1.7"/></svg></div><div class="cb" style="right:13.40px"><svg style="left:2px;top:1.6px" width="6" height="5" viewBox="0 0 8 7"><rect x=".7" y=".7" width="6.6" height="5.6" fill="none" stroke="#fff" stroke-width="1"/><rect x="0" y="0" width="7" height="6" fill="none" stroke="#808080" stroke-width="1"/><rect x="0" y="0" width="7" height="1.6" fill="#808080"/></svg></div><div class="cb" style="right:23.60px"><div class="a" style="left:2.4px;top:5.6px;width:4.2px;height:1.4px;background:#000"></div></div></div><div class="g" style="left:3.2px;top:21.2px;width:237.4px;height:49.2px"></div><div class="t m" style="left:9.4px;top:15.2px;background:#D4D0C8;padding:0 2px 0 6.6px">Step  1  - Load the DB settings</div><div class="t m" style="left:14.00px;top:31.60px;">INI File Name :</div><div class="s" style="left:79.0px;top:30.0px;width:135.4px;height:13.4px;background:#fff"></div><div class="t m" style="left:81.60px;top:31.20px;color:#808080">D:\a3server\ODB_PORT\9980\cdb.ini</div><div class="b m" style="left:219.6px;top:30.0px;width:17px;height:14px;line-height:16.5px;color:#808080">...</div><div class="b m" style="left:160.0px;top:49.6px;width:76.6px;height:16.2px;line-height:16.2px;color:#808080;text-shadow:.7px .7px #fff">Click</div><div class="g" style="left:3.2px;top:80.6px;width:237.4px;height:28px"></div><div class="t m" style="left:9.4px;top:74.6px;background:#D4D0C8;padding:0 2px 0 6.6px">Step 2  - Connect to each DB server</div><div class="b m" style="left:160.0px;top:87.8px;width:76.6px;height:16.2px;line-height:16.2px;color:#808080;text-shadow:.7px .7px #fff">Click</div><div class="t m" style="left:6.60px;top:119.20px;color:#808080;text-shadow:.7px .7px #fff">PORT :</div><div class="s" style="left:39.0px;top:118.6px;width:44px;height:13.4px;background:#fff"></div><div class="t m" style="left:41.40px;top:119.40px;color:#808080">9980</div><div class="b m" style="left:111.4px;top:117.6px;width:43px;height:15.8px;line-height:15.8px;font-weight:bold">Debug</div><div class="b m" style="left:159.6px;top:116.6px;width:77.6px;height:17.4px;line-height:17.4px;color:#808080;text-shadow:.7px .7px #fff;border:.8px solid #303030">Start</div><div class="s" style="left:2.8px;top:137.0px;width:237.2px;height:45.2px;background:#fff"></div><div class="t m" style="left:5.00px;top:138.20px;color:#0000A0">[OK], CON/h3db13 Server time : 2026-3-9 13:26:31</div><div class="t m" style="left:5.00px;top:149.10px;color:#0000A0">[OK], CON/h3db14 Server time : 2026-3-9 13:26:31</div><div class="t m" style="left:5.00px;top:160.00px;color:#0000A0">[OK], CON/h3db15 Server time : 2026-3-9 13:26:31</div><div class="sb" style="left:228.80px;top:139.00px;width:9.60px;height:42.00px"><div class="sa" style="top:0;height:9.60px"><svg style="left:2.30px;top:3.00px" width="5" height="3" viewBox="0 0 6 3"><path d="M0 3L3 0L6 3Z" fill="#000"/></svg></div><div class="sa" style="bottom:0;height:9.60px"><svg style="left:2.30px;top:3.60px" width="5" height="3" viewBox="0 0 6 3"><path d="M0 0L3 3L6 0Z" fill="#000"/></svg></div><div class="sa" style="top:25.20px;height:7.00px"></div></div><div class="s" style="left:2.4px;top:185.8px;width:237.6px;height:62px;background:#fff"></div><div class="t m" style="left:5.00px;top:187.40px;color:#0000A0">[OK] Listening on 9980</div><div class="t m" style="left:5.00px;top:198.00px;color:#0000A0">[CON] 127.0.0.1(131602)</div><div class="t m" style="left:6.80px;top:251.00px;">Queue Count :</div><div class="t m" style="left:86.00px;top:251.20px;font-weight:bold;font-size:9.6px">0</div><div class="t m" style="left:93.40px;top:250.80px;font-size:7.8px">/0</div><div class="t m" style="left:152.60px;top:251.00px;">Tps :</div><div class="t m" style="left:200.00px;top:251.20px;font-weight:bold;font-size:9.6px">0</div><div class="t m" style="left:207.40px;top:250.80px;font-size:7.8px">/0</div><div class="a m" style="left:2.8px;top:266.0px;width:238.8px;height:16.8px;background:#00FF00;line-height:16.8px;text-align:center;font-size:8.2px;letter-spacing:-.22px">Running [00:42:28]</div><div class="a" style="left:2.4px;top:285.8px;width:239.6px;height:13.4px;box-shadow:inset .8px .8px #808080,inset -.8px -.8px #fff"></div></div>
<div class="w" style="left:104.00px;top:36.40px;width:244.20px;height:301.00px;background:#D4D0C8;"><div class="tb" style="left:2.2px;right:2.2px;top:2.2px;height:11px"><svg class="a" style="left:0.80px;top:0.00px" width="11.00" height="11.00"><use href="#iasd"/></svg><svg class="a" style="left:12.90px;top:1.30px" width="8.60" height="8.60" fill="none" stroke="#D8D4CC" stroke-width="2.30"><use href="#c_cang"/></svg><svg class="a" style="left:21.35px;top:1.30px" width="8.60" height="8.60" fill="none" stroke="#D8D4CC" stroke-width="2.30"><use href="#c_ku"/></svg><svg class="a" style="left:29.80px;top:1.30px" width="8.60" height="8.60" fill="none" stroke="#D8D4CC" stroke-width="2.30"><use href="#c_fu"/></svg><svg class="a" style="left:38.25px;top:1.30px" width="8.60" height="8.60" fill="none" stroke="#D8D4CC" stroke-width="2.30"><use href="#c_wu"/></svg><div class="tt" style="left:53px">ASD v1.3.21a</div><div class="cb" style="right:1.60px"><svg style="left:2.4px;top:1.8px" width="5" height="4.6" viewBox="0 0 8 7"><path d="M0 0L8 7M8 0L0 7" stroke="#000" stroke-width="1.7"/></svg></div><div class="cb" style="right:13.40px"><svg style="left:2px;top:1.6px" width="6" height="5" viewBox="0 0 8 7"><rect x=".7" y=".7" width="6.6" height="5.6" fill="none" stroke="#fff" stroke-width="1"/><rect x="0" y="0" width="7" height="6" fill="none" stroke="#808080" stroke-width="1"/><rect x="0" y="0" width="7" height="1.6" fill="#808080"/></svg></div><div class="cb" style="right:23.60px"><div class="a" style="left:2.4px;top:5.6px;width:4.2px;height:1.4px;background:#000"></div></div></div><div class="g" style="left:3.2px;top:21.2px;width:237.4px;height:49.2px"></div><div class="t m" style="left:9.4px;top:15.2px;background:#D4D0C8;padding:0 2px 0 6.6px">Step  1  - Load the DB settings</div><div class="t m" style="left:14.00px;top:31.60px;">INI File Name :</div><div class="s" style="left:79.0px;top:30.0px;width:135.4px;height:13.4px;background:#fff"></div><div class="t m" style="left:81.60px;top:31.20px;color:#808080">D:\a3server\ODB_PORT\9990\tdb.ini</div><div class="b m" style="left:219.6px;top:30.0px;width:17px;height:14px;line-height:16.5px;color:#808080">...</div><div class="b m" style="left:160.0px;top:49.6px;width:76.6px;height:16.2px;line-height:16.2px;color:#808080;text-shadow:.7px .7px #fff">Click</div><div class="g" style="left:3.2px;top:80.6px;width:237.4px;height:28px"></div><div class="t m" style="left:9.4px;top:74.6px;background:#D4D0C8;padding:0 2px 0 6.6px">Step 2  - Connect to each DB server</div><div class="b m" style="left:160.0px;top:87.8px;width:76.6px;height:16.2px;line-height:16.2px;color:#808080;text-shadow:.7px .7px #fff">Click</div><div class="t m" style="left:6.60px;top:119.20px;color:#808080;text-shadow:.7px .7px #fff">PORT :</div><div class="s" style="left:39.0px;top:118.6px;width:44px;height:13.4px;background:#fff"></div><div class="t m" style="left:41.40px;top:119.40px;color:#808080">9990</div><div class="b m" style="left:111.4px;top:117.6px;width:43px;height:15.8px;line-height:15.8px;font-weight:bold">Debug</div><div class="b m" style="left:159.6px;top:116.6px;width:77.6px;height:17.4px;line-height:17.4px;color:#808080;text-shadow:.7px .7px #fff;border:.8px solid #303030">Start</div><div class="s" style="left:2.8px;top:137.0px;width:237.2px;height:45.2px;background:#fff"></div><div class="t m" style="left:5.00px;top:138.20px;color:#0000A0">[OK], CON/h3db13 Server time : 2026-3-9 13:26:31</div><div class="t m" style="left:5.00px;top:149.10px;color:#0000A0">[OK], CON/h3db14 Server time : 2026-3-9 13:26:31</div><div class="t m" style="left:5.00px;top:160.00px;color:#0000A0">[OK], CON/h3db15 Server time : 2026-3-9 13:26:31</div><div class="sb" style="left:228.80px;top:139.00px;width:9.60px;height:42.00px"><div class="sa" style="top:0;height:9.60px"><svg style="left:2.30px;top:3.00px" width="5" height="3" viewBox="0 0 6 3"><path d="M0 3L3 0L6 3Z" fill="#000"/></svg></div><div class="sa" style="bottom:0;height:9.60px"><svg style="left:2.30px;top:3.60px" width="5" height="3" viewBox="0 0 6 3"><path d="M0 0L3 3L6 0Z" fill="#000"/></svg></div><div class="sa" style="top:25.20px;height:7.00px"></div></div><div class="s" style="left:2.4px;top:185.8px;width:237.6px;height:62px;background:#fff"></div><div class="t m" style="left:5.00px;top:187.40px;color:#0000A0">[OK] Listening on 9990</div><div class="t m" style="left:5.00px;top:198.00px;color:#0000A0">[CON] 127.0.0.1(131602)</div><div class="t m" style="left:6.80px;top:251.00px;">Queue Count :</div><div class="t m" style="left:86.00px;top:251.20px;font-weight:bold;font-size:9.6px">0</div><div class="t m" style="left:93.40px;top:250.80px;font-size:7.8px">/0</div><div class="t m" style="left:152.60px;top:251.00px;">Tps :</div><div class="t m" style="left:200.00px;top:251.20px;font-weight:bold;font-size:9.6px">0</div><div class="t m" style="left:207.40px;top:250.80px;font-size:7.8px">/0</div><div class="a m" style="left:2.8px;top:266.0px;width:238.8px;height:16.8px;background:#00FF00;line-height:16.8px;text-align:center;font-size:8.2px;letter-spacing:-.22px">Running [00:42:28]</div><div class="a" style="left:2.4px;top:285.8px;width:239.6px;height:13.4px;box-shadow:inset .8px .8px #808080,inset -.8px -.8px #fff"></div></div>
<div class="a" style="left:0;top:596px;width:800px;height:21px;background:#D4D0C8;box-shadow:inset 0 .8px #D4D0C8,inset 0 1.6px #fff"><div class="b" style="left:2.2px;top:3.4px;width:30.4px;height:14.2px"><svg style="left:2.6px;top:2.4px" width="9.4" height="9" viewBox="0 0 10 10"><path d="M0 1.5Q2.5 0 4.5 1V4.5Q2.5 3.5 0 5Z" fill="#E04020"/><path d="M5.2 1.2Q7.5 2.5 10 1V4.5Q7.5 6 5.2 4.7Z" fill="#30A030"/><path d="M0 5.8Q2.5 4.3 4.5 5.3V8.8Q2.5 7.8 0 9.3Z" fill="#2050D0"/><path d="M5.2 5.5Q7.5 6.8 10 5.3V8.8Q7.5 10.3 5.2 9Z" fill="#F0C020"/></svg><svg class="a" style="left:12.60px;top:3.00px" width="8.20" height="8.20" fill="none" stroke="#000" stroke-width="1.45"><use href="#c_kai"/></svg><svg class="a" style="left:20.90px;top:3.00px" width="8.20" height="8.20" fill="none" stroke="#000" stroke-width="1.45"><use href="#c_shi"/></svg></div><svg style="left:38.4px;top:5.6px" width="11" height="11" viewBox="0 0 12 12"><circle cx="6" cy="6.4" r="4.2" fill="none" stroke="#2080E8" stroke-width="2.2"/><path d="M2 6.4H10" stroke="#2080E8" stroke-width="1.6"/><ellipse cx="6" cy="5.6" rx="6" ry="2.4" fill="none" stroke="#F0C030" stroke-width=".9" transform="rotate(-25 6 6)"/></svg><svg style="left:54px;top:5.2px" width="11" height="11.4" viewBox="0 0 12 12"><rect x="1" y="1" width="10" height="10" rx="2.4" fill="#2890E8"/><circle cx="6" cy="6" r="3" fill="none" stroke="#E8F4FF" stroke-width="1.6"/><rect x="6" y="5.2" width="3.6" height="1.6" fill="#E8F4FF"/></svg><div class="b" style="left:92.60px;top:3.4px;width:50.6px;height:14.4px"><svg class="a" style="left:3.00px;top:1.80px" width="10.60" height="10.60"><use href="#iasd"/></svg><svg class="a" style="left:15.20px;top:3.40px" width="8.00" height="8.00" fill="none" stroke="#000" stroke-width="1.25"><use href="#c_zhang"/></svg><svg class="a" style="left:23.50px;top:3.40px" width="8.00" height="8.00" fill="none" stroke="#000" stroke-width="1.25"><use href="#c_hu"/></svg><div class="t m" style="left:31.4px;top:2.2px">...</div></div><div class="b" style="left:147.02px;top:3.4px;width:50.6px;height:14.4px"><svg class="a" style="left:3.00px;top:1.80px" width="10.60" height="10.60"><use href="#iasd"/></svg><svg class="a" style="left:15.20px;top:3.40px" width="8.00" height="8.00" fill="none" stroke="#000" stroke-width="1.25"><use href="#c_jue"/></svg><svg class="a" style="left:23.50px;top:3.40px" width="8.00" height="8.00" fill="none" stroke="#000" stroke-width="1.25"><use href="#c_se"/></svg><div class="t m" style="left:31.4px;top:2.2px">...</div></div><div class="b" style="left:201.44px;top:3.4px;width:50.6px;height:14.4px"><svg class="a" style="left:3.00px;top:1.80px" width="10.60" height="10.60"><use href="#iasd"/></svg><svg class="a" style="left:15.20px;top:3.40px" width="8.00" height="8.00" fill="none" stroke="#000" stroke-width="1.25"><use href="#c_cang"/></svg><svg class="a" style="left:23.50px;top:3.40px" width="8.00" height="8.00" fill="none" stroke="#000" stroke-width="1.25"><use href="#c_ku"/></svg><div class="t m" style="left:31.4px;top:2.2px">...</div></div><div class="b" style="left:255.86px;top:3.4px;width:50.6px;height:14.4px"><svg class="a" style="left:3.00px;top:1.80px" width="10.60" height="10.60"><use href="#ilock"/></svg><div class="t m" style="left:15.6px;top:1.4px">newlo...</div></div><div class="b" style="left:310.28px;top:3.4px;width:50.6px;height:14.4px"><svg class="a" style="left:3.00px;top:1.80px" width="10.60" height="10.60"><use href="#ila"/></svg><div class="t m" style="left:15.6px;top:1.4px">enLog...</div></div><div class="b" style="left:364.70px;top:3.4px;width:50.6px;height:14.4px"><svg class="a" style="left:3.00px;top:1.80px" width="10.60" height="10.60"><use href="#iflag"/></svg><div class="t m" style="left:15.6px;top:1.4px">EnZon...</div></div><div class="b" style="left:419.12px;top:3.4px;width:50.6px;height:14.4px"><svg class="a" style="left:3.00px;top:1.80px" width="10.60" height="10.60"><use href="#ia3"/></svg><div class="t m" style="left:15.6px;top:1.4px">[Taiw...</div></div><div class="b" style="left:473.54px;top:3.4px;width:50.6px;height:14.4px"><svg class="a" style="left:3.00px;top:1.80px" width="10.60" height="10.60"><use href="#ia3"/></svg><div class="t m" style="left:15.6px;top:1.4px">[ Tai...</div></div><div class="b" style="left:527.96px;top:3.4px;width:50.6px;height:14.4px"><svg class="a" style="left:3.00px;top:1.80px" width="10.60" height="10.60"><use href="#ia3"/></svg><div class="t m" style="left:15.6px;top:1.4px">[Taiw...</div></div><svg style="left:588px;top:6.6px" width="10.4" height="10" viewBox="0 0 10 10"><rect width="10" height="10" fill="#202020"/><rect x="1" y="1" width="4" height="3.4" fill="#C0C0C0"/><rect x="5.6" y="1" width="3.6" height="3.4" fill="#E0E0E0"/><rect x="1" y="5.2" width="4" height="4" fill="#F0E020"/><rect x="5.6" y="5.2" width="3.6" height="4" fill="#E02020"/></svg><svg class="a" style="left:602.80px;top:6.20px" width="9.60" height="9.60" fill="none" stroke="#C80808" stroke-width="1.25"><use href="#c_zhong"/></svg><svg style="left:618.4px;top:7px" width="8" height="8.6" viewBox="0 0 9 10"><path d="M4 0Q8 3 7 7Q5 10 0 8.6Q4.6 8 5 4.4Q5 2 4 0Z" fill="#F0D000" stroke="#806000" stroke-width=".5"/></svg><svg style="left:634px;top:7px" width="8" height="9" viewBox="0 0 8 9"><circle cx="2" cy="2.4" r="1.3" fill="none" stroke="#D01010" stroke-width=".9"/><path d="M6 5.6Q6.8 7 5.4 8.4" fill="none" stroke="#D01010" stroke-width="1.1"/></svg><svg style="left:647px;top:6.6px" width="10.6" height="10" viewBox="0 0 11 10"><rect x=".5" y=".5" width="8.4" height="8" fill="#fff" stroke="#203060"/><rect x=".5" y=".5" width="8.4" height="2" fill="#2040A0"/><rect x="6.4" y="3.4" width="2" height="5" fill="#B0B8C8"/><path d="M7.6 5L10.6 8L9 8.2L9.6 9.8L8.6 9.8L8.2 8.4L7.4 9Z" fill="#fff" stroke="#000" stroke-width=".5"/></svg><div class="a" style="left:661.4px;top:4px;width:1.6px;height:14px;box-shadow:inset .8px 0 #808080,inset -.8px 0 #fff"></div><svg style="left:666.4px;top:6.8px" width="9.4" height="9.4" viewBox="0 0 10 10"><circle cx="5" cy="5" r="4.8" fill="#2060D8"/><circle cx="4.2" cy="4" r="3" fill="#5090F0" opacity=".6"/><path d="M3.4 3.8Q3.4 2.2 5 2.2Q6.6 2.2 6.6 3.6Q6.6 4.6 5 5.2V6.2" fill="none" stroke="#fff" stroke-width="1.2"/><circle cx="5" cy="7.8" r=".75" fill="#fff"/></svg><div class="a" style="left:680px;top:4px;width:1.6px;height:14px;box-shadow:inset .8px 0 #808080,inset -.8px 0 #fff"></div><svg style="left:684.4px;top:5.4px" width="6" height="10" viewBox="0 0 6 10"><rect x="1.6" y=".4" width="4" height="2.6" fill="#fff" stroke="#404040" stroke-width=".6"/><rect x=".4" y="1.6" width="4" height="2.6" fill="#fff" stroke="#404040" stroke-width=".6"/><path d="M1 7.6H5L3 9.6Z" fill="#000"/></svg><div class="a" style="left:719px;top:3.4px;width:79px;height:15.4px;box-shadow:inset .8px .8px #808080,inset -.8px -.8px #fff"></div><svg style="left:721.6px;top:6.4px" width="9.4" height="9.4" viewBox="0 0 10 10"><rect width="10" height="10" rx="1" fill="#505860"/><rect x="1" y="1" width="8" height="8" fill="#78808C"/><path d="M2 3.4V7L3.6 3.4M4.6 7V3.4L6.2 6L7.8 3.4V7" stroke="#fff" stroke-width=".9" fill="none"/></svg><svg style="left:733.4px;top:5.8px" width="10" height="10.6" viewBox="0 0 10 11"><rect x="3.4" y=".4" width="6" height="5" fill="#3050B0" stroke="#C0C8D8" stroke-width=".7"/><rect x=".6" y="3.4" width="6" height="5" fill="#2040A0" stroke="#D0D8E8" stroke-width=".7"/><rect x="1" y="9" width="6" height="1.4" fill="#808080"/></svg><svg style="left:746px;top:5.4px" width="10" height="11" viewBox="0 0 10 11"><path d="M1 3L4 1L7 4L4 6Z" fill="#30B030"/><path d="M2 6.4L7 4.4L9.6 8L4.4 10.4Z" fill="#C8C8C0" stroke="#606060" stroke-width=".6"/><path d="M3 1L6 3" stroke="#106010" stroke-width=".8"/></svg><svg style="left:758px;top:5.4px" width="10" height="11" viewBox="0 0 10 11"><rect x="1.4" y=".6" width="5.4" height="9" fill="#fff" stroke="#606060" stroke-width=".7"/><rect x="6" y="2" width="2.6" height="6" fill="#D0D0D0" stroke="#808080" stroke-width=".5"/><circle cx="6.6" cy="7.6" r="2.8" fill="#20A020"/><path d="M5.6 6.2L8 7.6L5.6 9Z" fill="#fff"/></svg><div class="t m" style="left:773px;top:5.4px">14:09</div></div>
</div></body></html>
